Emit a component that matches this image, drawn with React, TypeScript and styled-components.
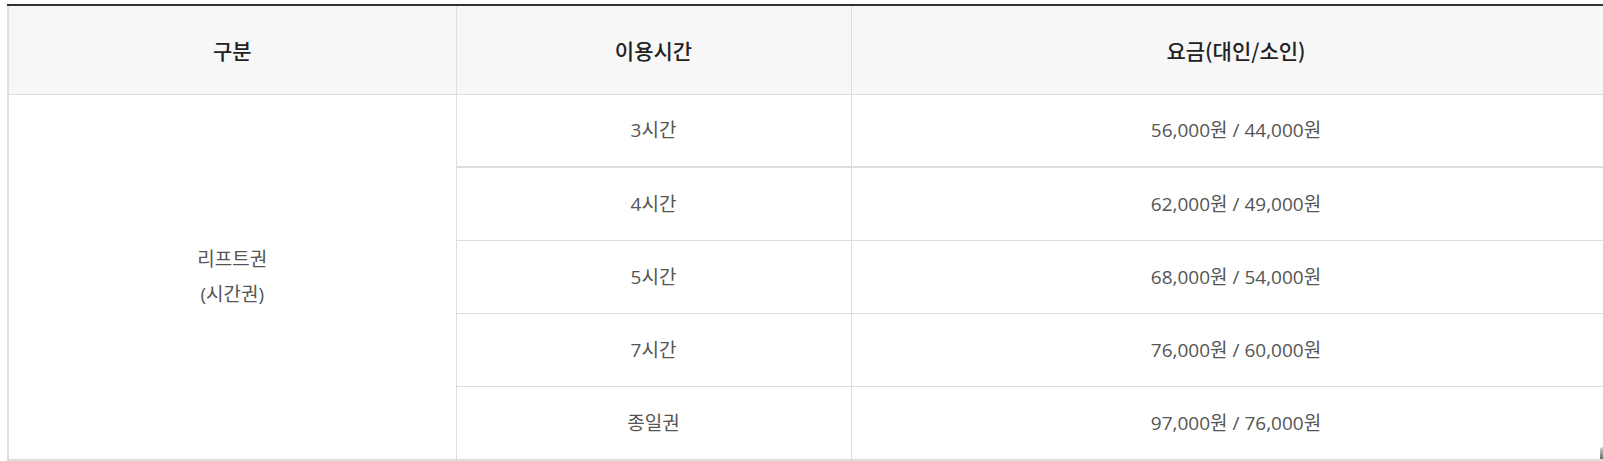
import React from "react";
import styled, { createGlobalStyle } from "styled-components";

const GlobalStyle = createGlobalStyle`
  html, body {
    margin: 0;
    padding: 0;
    background: #ffffff;
    overflow: hidden;
  }
  body {
    font-family: "Open Sans", "Noto Sans CJK KR", sans-serif;
  }
`;

const Wrapper = styled.div`
  position: relative;
  padding: 4px 0 0 7px;
  width: 100%;
  height: 461px;
  box-sizing: border-box;
  overflow: hidden;
`;

const Table = styled.table`
  width: 1613px;
  table-layout: fixed;
  border-collapse: collapse;
  border-top: 2px solid #333333;
  border-left: 2px solid #dddddd;
  border-bottom: 2px solid #dddddd;
`;

const HeadCell = styled.th`
  height: 88px;
  padding: 0;
  background: #f7f7f7;
  color: #222222;
  font-family: "Noto Sans CJK KR", sans-serif;
  font-size: 21px;
  font-weight: 500;
  text-align: center;
  vertical-align: middle;
  border-right: 1px solid #dddddd;
  border-bottom: 1px solid #dddddd;
`;

const Cell = styled.td<{ $thick?: boolean }>`
  height: ${(p) => (p.$thick ? "71px" : "72px")};
  padding: 0;
  color: #555555;
  font-size: 19px;
  font-weight: 400;
  line-height: 35px;
  text-align: center;
  vertical-align: middle;
  border-right: 1px solid #dddddd;
  border-bottom: ${(p) => (p.$thick ? "2px" : "1px")} solid #dddddd;
`;

const Grip = styled.div`
  position: absolute;
  right: 0;
  top: 447px;
  width: 3px;
  height: 12px;
  background: linear-gradient(to bottom, #d0d0d0, #6a6a6a);
  border-top-left-radius: 3px;
`;

const rows = [
  { time: "3시간", price: "56,000원 / 44,000원" },
  { time: "4시간", price: "62,000원 / 49,000원" },
  { time: "5시간", price: "68,000원 / 54,000원" },
  { time: "7시간", price: "76,000원 / 60,000원" },
  { time: "종일권", price: "97,000원 / 76,000원" },
];

export default function App() {
  return (
    <>
      <GlobalStyle />
      <Wrapper>
        <Table>
          <colgroup>
            <col style={{ width: 448 }} />
            <col style={{ width: 395 }} />
            <col style={{ width: 770 }} />
          </colgroup>
          <thead>
            <tr>
              <HeadCell>구분</HeadCell>
              <HeadCell>이용시간</HeadCell>
              <HeadCell>요금(대인/소인)</HeadCell>
            </tr>
          </thead>
          <tbody>
            {rows.map((r, i) => (
              <tr key={r.time}>
                {i === 0 && (
                  <Cell rowSpan={rows.length}>
                    리프트권
                    <br />
                    (시간권)
                  </Cell>
                )}
                <Cell $thick={i === 0}>{r.time}</Cell>
                <Cell $thick={i === 0}>{r.price}</Cell>
              </tr>
            ))}
          </tbody>
        </Table>
        <Grip />
      </Wrapper>
    </>
  );
}
